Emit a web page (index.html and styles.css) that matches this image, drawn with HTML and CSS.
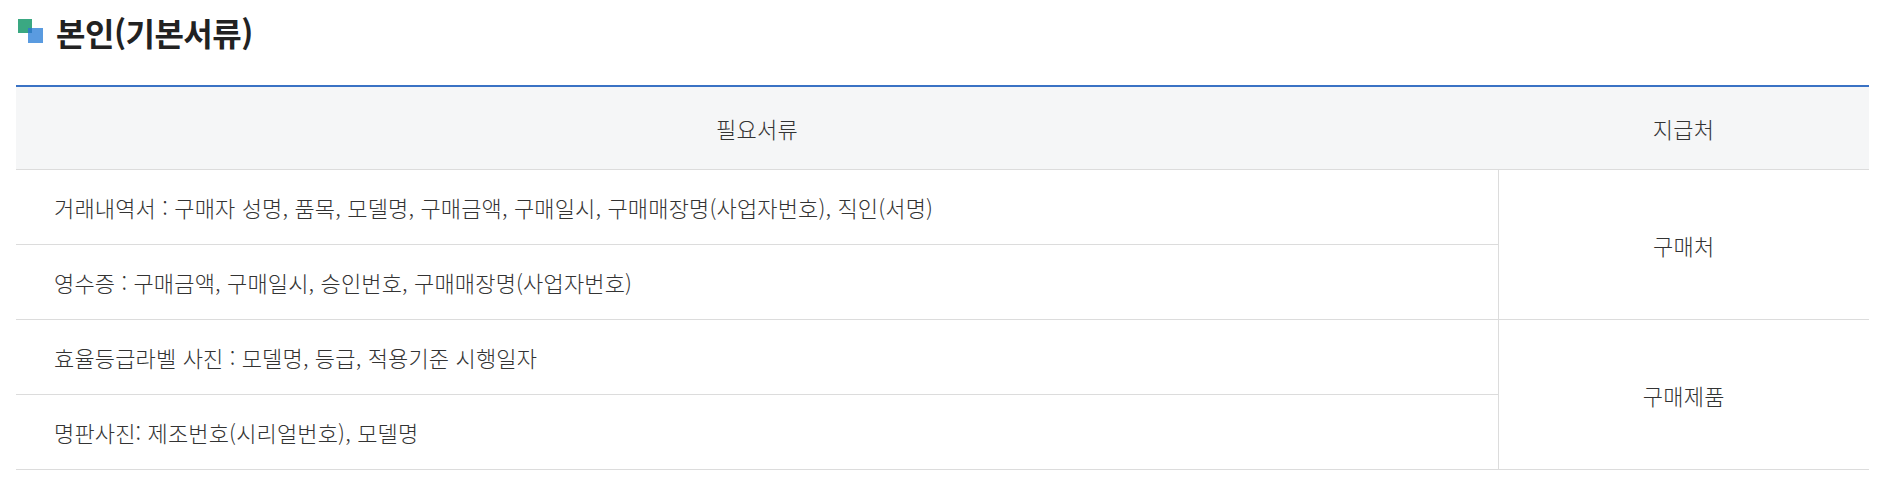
FILE: index.html
```html
<!DOCTYPE html>
<html lang="ko">
<head>
<meta charset="utf-8">
<link rel="stylesheet" href="styles.css">
</head>
<body>
<div class="page">
  <h2 class="title">
    <svg class="title-icon" width="26" height="26" viewBox="0 0 26 26" aria-hidden="true">
      <rect x="0" y="0" width="14" height="14" fill="#3aa882"/>
      <rect x="10" y="9" width="15" height="15" fill="#5a9be0"/>
      <rect x="10" y="9" width="4" height="5" fill="#2f7fc4"/>
    </svg>
    <span>본인(기본서류)</span>
  </h2>
  <table class="docs">
    <colgroup>
      <col class="col-doc">
      <col class="col-src">
    </colgroup>
    <thead>
      <tr><th>필요서류</th><th>지급처</th></tr>
    </thead>
    <tbody>
      <tr>
        <td class="doc">거래내역서 : 구매자 성명, 품목, 모델명, 구매금액, 구매일시, 구매매장명(사업자번호), 직인(서명)</td>
        <td class="src" rowspan="2">구매처</td>
      </tr>
      <tr class="group-end">
        <td class="doc">영수증 : 구매금액, 구매일시, 승인번호, 구매매장명(사업자번호)</td>
      </tr>
      <tr>
        <td class="doc">효율등급라벨 사진 : 모델명, 등급, 적용기준 시행일자</td>
        <td class="src" rowspan="2">구매제품</td>
      </tr>
      <tr class="group-end">
        <td class="doc">명판사진: 제조번호(시리얼번호), 모델명</td>
      </tr>
    </tbody>
  </table>
</div>
</body>
</html>
```

FILE: styles.css
```css
html, body {
  margin: 0;
  padding: 0;
  background: #fff;
}

.page {
  padding: 17px 21px 0 16px;
  font-family: "Noto Sans CJK KR", "Noto Sans", sans-serif;
  color: #333;
}

.title {
  display: flex;
  align-items: center;
  gap: 12px;
  margin: 0 0 38px 2px;
  height: 30px;
  font-size: 32px;
  font-weight: 700;
  letter-spacing: -0.5px;
  color: #222;
}

.title-icon {
  flex: none;
  margin-top: -1px;
}

.docs {
  width: 100%;
  border-collapse: collapse;
  table-layout: fixed;
  border-top: 2px solid #3a72c4;
}

.col-doc { width: 1482px; }
.col-src { width: auto; }

.docs th {
  height: 82px;
  padding: 0;
  background: #f5f6f7;
  border-bottom: 1px solid #dcdcdc;
  font-size: 22px;
  font-weight: 300;
  color: #333;
  text-align: center;
  letter-spacing: 0.3px;
}

.docs td {
  height: 74px;
  padding: 0;
  border-bottom: 1px solid #dcdcdc;
  font-size: 22px;
  font-weight: 300;
  color: #333;
  letter-spacing: 0.15px;
}

.docs td.doc {
  padding-left: 38px;
}

.docs td.src {
  text-align: center;
  border-left: 1px solid #dcdcdc;
  letter-spacing: 0.3px;
}
```
